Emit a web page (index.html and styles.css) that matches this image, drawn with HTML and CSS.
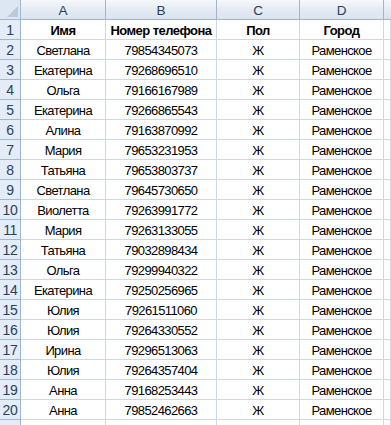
FILE: index.html
```html
<!DOCTYPE html>
<html lang="ru">
<head>
<meta charset="utf-8">
<title>Лист</title>
<link rel="stylesheet" href="styles.css">
</head>
<body>
<div class="sheet">
  <div class="hd corner"><span class="tri"></span></div>
  <div class="hd col">A</div>
  <div class="hd col">B</div>
  <div class="hd col">C</div>
  <div class="hd col">D</div>
  <div class="hd col last"></div>

  <div class="rh">1</div><div class="c b">Имя</div><div class="c b">Номер телефона</div><div class="c b">Пол</div><div class="c b">Город</div><div class="c"></div>
  <div class="rh">2</div><div class="c">Светлана</div><div class="c">79854345073</div><div class="c">Ж</div><div class="c">Раменское</div><div class="c"></div>
  <div class="rh">3</div><div class="c">Екатерина</div><div class="c">79268696510</div><div class="c">Ж</div><div class="c">Раменское</div><div class="c"></div>
  <div class="rh">4</div><div class="c">Ольга</div><div class="c">79166167989</div><div class="c">Ж</div><div class="c">Раменское</div><div class="c"></div>
  <div class="rh">5</div><div class="c">Екатерина</div><div class="c">79266865543</div><div class="c">Ж</div><div class="c">Раменское</div><div class="c"></div>
  <div class="rh">6</div><div class="c">Алина</div><div class="c">79163870992</div><div class="c">Ж</div><div class="c">Раменское</div><div class="c"></div>
  <div class="rh">7</div><div class="c">Мария</div><div class="c">79653231953</div><div class="c">Ж</div><div class="c">Раменское</div><div class="c"></div>
  <div class="rh">8</div><div class="c">Татьяна</div><div class="c">79653803737</div><div class="c">Ж</div><div class="c">Раменское</div><div class="c"></div>
  <div class="rh">9</div><div class="c">Светлана</div><div class="c">79645730650</div><div class="c">Ж</div><div class="c">Раменское</div><div class="c"></div>
  <div class="rh">10</div><div class="c">Виолетта</div><div class="c">79263991772</div><div class="c">Ж</div><div class="c">Раменское</div><div class="c"></div>
  <div class="rh">11</div><div class="c">Мария</div><div class="c">79263133055</div><div class="c">Ж</div><div class="c">Раменское</div><div class="c"></div>
  <div class="rh">12</div><div class="c">Татьяна</div><div class="c">79032898434</div><div class="c">Ж</div><div class="c">Раменское</div><div class="c"></div>
  <div class="rh">13</div><div class="c">Ольга</div><div class="c">79299940322</div><div class="c">Ж</div><div class="c">Раменское</div><div class="c"></div>
  <div class="rh">14</div><div class="c">Екатерина</div><div class="c">79250256965</div><div class="c">Ж</div><div class="c">Раменское</div><div class="c"></div>
  <div class="rh">15</div><div class="c">Юлия</div><div class="c">79261511060</div><div class="c">Ж</div><div class="c">Раменское</div><div class="c"></div>
  <div class="rh">16</div><div class="c">Юлия</div><div class="c">79264330552</div><div class="c">Ж</div><div class="c">Раменское</div><div class="c"></div>
  <div class="rh">17</div><div class="c">Ирина</div><div class="c">79296513063</div><div class="c">Ж</div><div class="c">Раменское</div><div class="c"></div>
  <div class="rh">18</div><div class="c">Юлия</div><div class="c">79264357404</div><div class="c">Ж</div><div class="c">Раменское</div><div class="c"></div>
  <div class="rh">19</div><div class="c">Анна</div><div class="c">79168253443</div><div class="c">Ж</div><div class="c">Раменское</div><div class="c"></div>
  <div class="rh">20</div><div class="c">Анна</div><div class="c">79852462663</div><div class="c">Ж</div><div class="c">Раменское</div><div class="c"></div>
  <div class="rh"></div><div class="c"></div><div class="c"></div><div class="c"></div><div class="c"></div><div class="c"></div>
</div>
</body>
</html>
```

FILE: styles.css
```css
html, body {
  margin: 0;
  padding: 0;
  background: #ffffff;
}

.sheet {
  display: grid;
  grid-template-columns: 21px 85px 111px 83px 84px 1fr;
  grid-auto-rows: 20px;
  width: 391px;
  height: 425px;
  overflow: hidden;
  font-family: "Liberation Sans", Arial, sans-serif;
  font-size: 13px;
  letter-spacing: -0.6px;
  color: #000000;
}

.sheet > div {
  box-sizing: border-box;
  display: flex;
  align-items: center;
  justify-content: center;
  white-space: nowrap;
  overflow: hidden;
}

.hd {
  background: linear-gradient(#f5f8fc, #e4eaf2 55%, #dae3ee);
  border-right: 1px solid #9eb6ce;
  border-bottom: 1px solid #9eb6ce;
  color: #27415f;
  font-size: 13.5px;
  letter-spacing: 0;
  padding-top: 1px;
}

.hd.last {
  border-right: none;
}

.corner {
  position: relative;
  background: #dde6f1;
}

.tri {
  position: absolute;
  right: 2px;
  bottom: 2px;
  width: 0;
  height: 0;
  border-left: 11px solid transparent;
  border-bottom: 11px solid #bcc9d9;
}

.rh {
  background: #e4ecf7;
  border-right: 1px solid #9eb6ce;
  border-bottom: 1px solid #9eb6ce;
  color: #27415f;
  font-size: 14px;
  letter-spacing: -0.4px;
  padding-top: 1px;
}

.c {
  border-right: 1px solid #d0d7e5;
  border-bottom: 1px solid #d0d7e5;
  padding-top: 1px;
}

.b {
  font-weight: bold;
  letter-spacing: -0.55px;
}
```
